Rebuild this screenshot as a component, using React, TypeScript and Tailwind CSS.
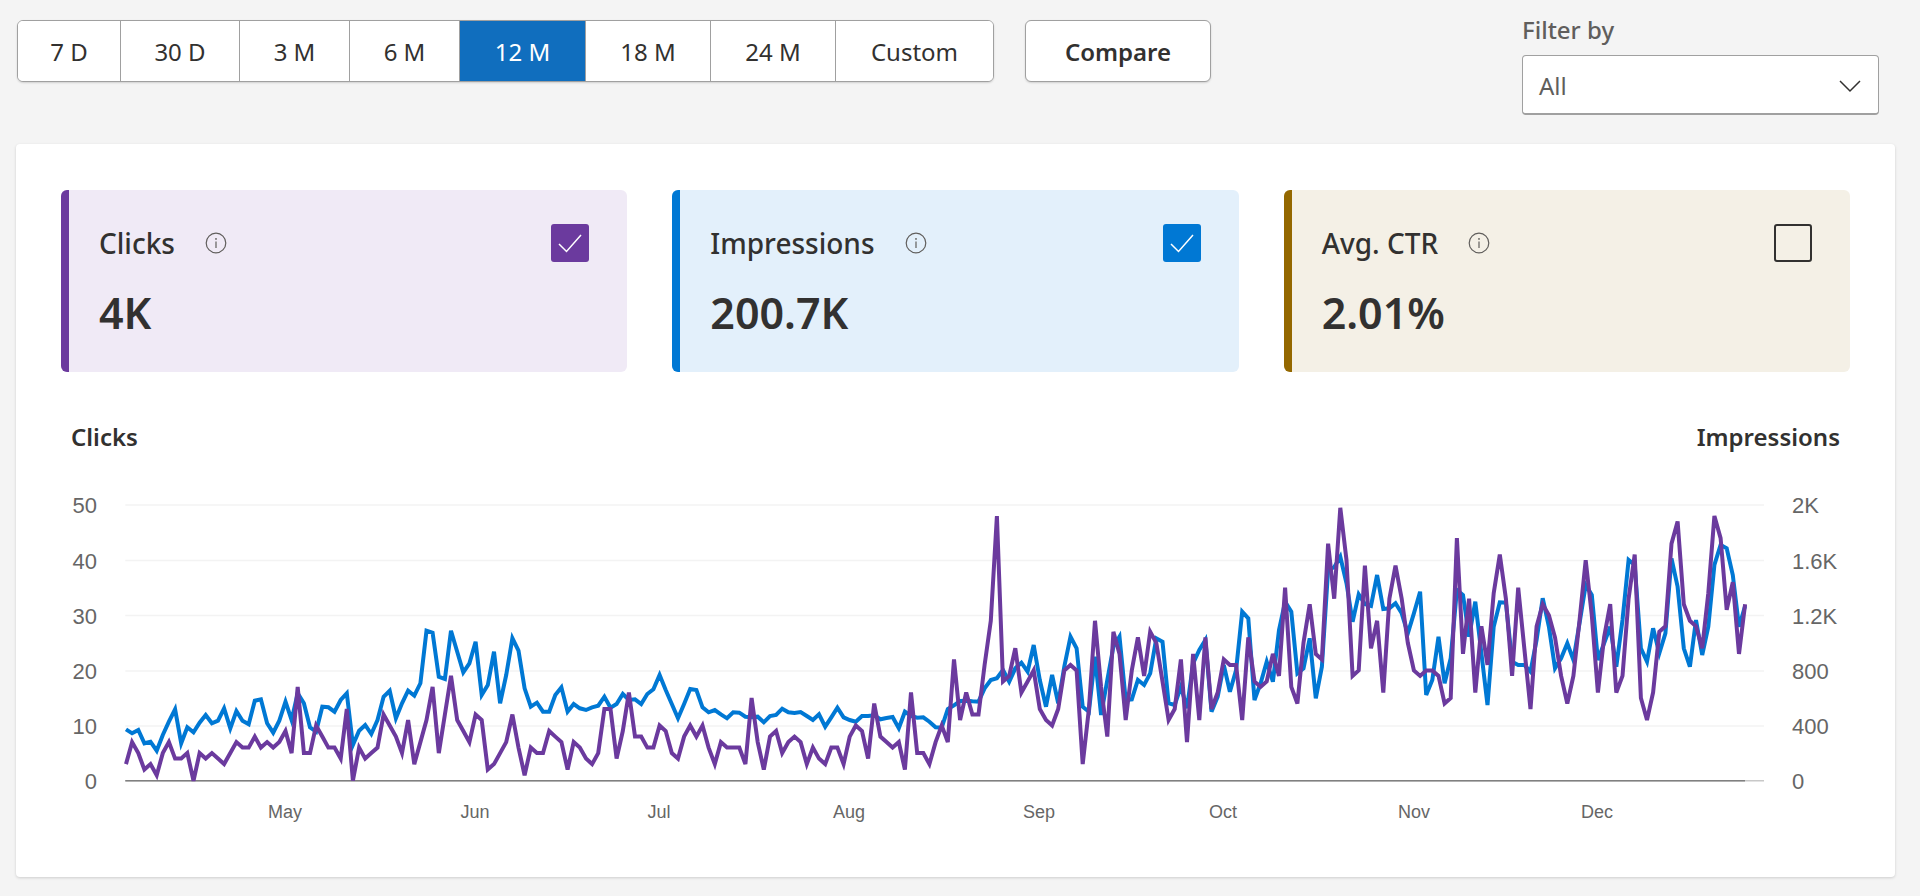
const ranges = [
  { label: "7 D", width: "w-[103px]" },
  { label: "30 D", width: "w-[119px]" },
  { label: "3 M", width: "w-[110px]" },
  { label: "6 M", width: "w-[110px]" },
  { label: "12 M", width: "w-[126px]", active: true },
  { label: "18 M", width: "w-[125px]" },
  { label: "24 M", width: "w-[125px]" },
  { label: "Custom", width: "w-[157px]" },
];

const metrics = [
  {
    title: "Clicks",
    value: "4K",
    panel: "bg-[#f0eaf6]",
    accent: "bg-[#6b3a9e]",
    box: "bg-[#6b3a9e]",
    checked: true,
  },
  {
    title: "Impressions",
    value: "200.7K",
    panel: "bg-[#e3f0fb]",
    accent: "bg-[#0078d4]",
    box: "bg-[#0078d4]",
    checked: true,
  },
  {
    title: "Avg. CTR",
    value: "2.01%",
    panel: "bg-[#f4f0e6]",
    accent: "bg-[#946800]",
    box: "",
    checked: false,
  },
];

// daily clicks, plotted against the 0-50 axis
const clicks = [
  3, 7, 5, 2, 3, 1, 5, 7, 4, 4, 5, 0, 5, 4, 5, 4, 3, 5, 7, 6,
  6, 8, 6, 7, 6, 7, 9, 5, 17, 5, 5, 10, 8, 6, 6, 4, 13, 0, 6, 4,
  5, 6, 12, 10, 8, 5, 11, 3, 7, 11, 17, 5, 12, 19, 11, 9, 7, 12, 11, 2,
  3, 5, 7, 12, 6, 1, 6, 5, 5, 9, 8, 7, 2, 7, 6, 4, 3, 5, 13, 13,
  4, 9, 16, 8, 8, 6, 6, 10, 9, 5, 4, 8, 10, 8, 10, 6, 3, 7, 6, 6,
  6, 3, 15, 7, 2, 8, 9, 5, 7, 8, 7, 3, 6, 4, 3, 6, 6, 3, 8, 10,
  9, 4, 14, 8, 7, 6, 7, 2, 16, 5, 5, 3, 7, 10, 7, 22, 11, 16, 12, 12,
  21, 29, 48, 18, 19, 24, 16, 18, 20, 13, 11, 10, 13, 20, 21, 20, 3, 13, 29, 17,
  8, 27, 23, 11, 20, 26, 19, 27, 25, 18, 11, 13, 22, 7, 23, 11, 26, 13, 16, 22,
  21, 21, 11, 26, 18, 17, 18, 23, 19, 35, 17, 14, 25, 32, 23, 22, 43, 33, 49.5, 40,
  19, 20, 39, 24, 29, 16, 33, 39, 33, 25, 20, 19, 20, 20, 19, 14, 15, 44, 23, 33,
  16, 28, 21, 34, 41, 33, 19, 35, 24, 13, 28, 32, 30, 26, 19, 14, 19, 29, 40, 30,
  16, 26, 32, 16, 19, 33, 41, 15, 11, 16, 27, 28, 43, 47, 32, 29, 28, 24, 34, 48,
  44, 31, 36, 23, 32,
];

// impressions, traced as height on a 3x grid (902 = axis, 75 = top line)
const impressions = [
  748, 760, 750, 790, 785, 812, 765, 725, 688, 790, 742, 757, 728, 705, 730, 722, 685, 745, 693, 722,
  733, 662, 658, 730, 758, 722, 665, 720, 640, 670, 742, 755, 680, 682, 695, 660, 640, 795, 752, 735,
  762, 720, 650, 632, 715, 670, 632, 647, 610, 452, 458, 590, 597, 452, 515, 577, 550, 485, 645, 615,
  515, 670, 585, 475, 512, 625, 680, 668, 695, 695, 645, 622, 695, 672, 685, 690, 682, 677, 650, 683,
  672, 642, 660, 658, 672, 642, 628, 585, 630, 672, 715, 672, 627, 630, 682, 697, 690, 703, 715, 697,
  698, 710, 712, 710, 727, 708, 705, 686, 697, 699, 696, 708, 720, 703, 740, 712, 683, 712, 720, 725,
  708, 708, 706, 718, 714, 711, 745, 695, 708, 713, 712, 725, 742, 743, 687, 676, 663, 662, 664, 665,
  625, 600, 595, 570, 605, 565, 548, 575, 495, 600, 680, 585, 670, 560, 470, 505, 680, 695, 530, 705,
  600, 500, 470, 660, 658, 600, 615, 580, 475, 485, 670, 675, 620, 685, 550, 510, 480, 695, 650, 555,
  635, 570, 395, 415, 660, 610, 545, 605, 450, 365, 395, 580, 565, 475, 655, 560, 270, 262, 230, 310,
  425, 343, 372, 378, 285, 387, 385, 370, 400, 460, 400, 335, 645, 600, 470, 610, 535, 330, 345, 470,
  365, 520, 675, 440, 367, 368, 545, 555, 555, 575, 480, 355, 440, 565, 535, 490, 540, 430, 315, 345,
  540, 490, 440, 560, 420, 240, 255, 505, 545, 445, 520, 460, 235, 320, 505, 560, 420, 525, 440, 255,
  195, 205, 285, 440, 378,
];

const leftTicks = ["50", "40", "30", "20", "10", "0"];
const rightTicks = ["2K", "1.6K", "1.2K", "800", "400", "0"];
const tickY = [25, 80.5, 135.5, 191, 246, 300.7];

const months = [
  { label: "May", x: 224 },
  { label: "Jun", x: 414 },
  { label: "Jul", x: 598 },
  { label: "Aug", x: 788 },
  { label: "Sep", x: 978 },
  { label: "Oct", x: 1162 },
  { label: "Nov", x: 1353 },
  { label: "Dec", x: 1536 },
];

const pointX = (i: number) => 65 + i * 6.133;
const clickPoints = clicks
  .map((v, i) => `${pointX(i).toFixed(1)},${((902 - v * 16.54) / 3).toFixed(1)}`)
  .join(" ");
const impressionPoints = impressions
  .map((v, i) => `${pointX(i).toFixed(1)},${(v / 3).toFixed(1)}`)
  .join(" ");

function InfoIcon() {
  return (
    <svg width="22" height="22" viewBox="0 0 22 22" fill="none" className="shrink-0">
      <circle cx="11" cy="11" r="9.8" stroke="#605e5c" strokeWidth="1.2" />
      <path d="M11 9.6v6.4" stroke="#605e5c" strokeWidth="1.2" />
      <circle cx="11" cy="6.9" r="0.9" fill="#605e5c" />
    </svg>
  );
}

function MetricCard({ title, value, panel, accent, box, checked }: (typeof metrics)[number]) {
  return (
    <div className={`flex h-[182px] overflow-hidden rounded-md ${panel}`}>
      <div className={`w-2 shrink-0 ${accent}`} />
      <div className="flex flex-1 items-start justify-between pl-[30px] pr-[38px] pt-[33px]">
        <div>
          <div className="flex h-10 items-center gap-[30px] text-[28px] font-medium text-[#323130]">
            {title}
            <InfoIcon />
          </div>
          <div className="mt-[20px] text-[43px] font-semibold leading-[60px] text-[#323130]">
            {value}
          </div>
        </div>
        {checked ? (
          <div className={`mt-px flex h-[38px] w-[38px] items-center justify-center rounded-[3px] ${box}`}>
            <svg width="26" height="22" viewBox="0 0 26 22" fill="none">
              <path d="M2 12l7.5 7.5L24 3" stroke="#fff" strokeWidth="1.5" />
            </svg>
          </div>
        ) : (
          <div className="mt-px h-[38px] w-[38px] rounded-[3px] border-2 border-[#323130]" />
        )}
      </div>
    </div>
  );
}

function TrendChart() {
  return (
    <svg width="1788" height="350" viewBox="0 0 1788 350" className="block font-['Liberation_Sans',Arial,sans-serif]">
      {tickY.slice(0, 5).map((y) => (
        <line key={y} x1="64.3" x2="1703" y1={y} y2={y} stroke="#f3f3f3" strokeWidth="1.5" />
      ))}
      <line x1="64.3" x2="1703" y1="300.7" y2="300.7" stroke="#c8c8c8" strokeWidth="1.5" />
      <line x1="64.3" x2="1684" y1="300.7" y2="300.7" stroke="#808080" strokeWidth="1.5" />
      {leftTicks.map((t, i) => (
        <text key={t} x="36" y={tickY[i] + 8} textAnchor="end" fontSize="22" fill="#666666">
          {t}
        </text>
      ))}
      {rightTicks.map((t, i) => (
        <text key={t} x="1731" y={tickY[i] + 8} fontSize="22" fill="#666666">
          {t}
        </text>
      ))}
      {months.map((m) => (
        <text key={m.label} x={m.x} y="338" textAnchor="middle" fontSize="18" fill="#666666">
          {m.label}
        </text>
      ))}
      <polyline points={impressionPoints} fill="none" stroke="#0078d4" strokeWidth="4" />
      <polyline points={clickPoints} fill="none" stroke="#6b3a9e" strokeWidth="4" />
    </svg>
  );
}

export default function App() {
  return (
    <div className="min-h-[896px] bg-[#f4f4f4] pt-5 font-['Noto_Sans',sans-serif] text-[#323130]">
      <div className="flex h-[124px] items-start pl-[17px] pr-[41px]">
        <div className="flex h-[62px] overflow-hidden rounded-md border border-[#a0a0a0] bg-white shadow-[0_1px_2px_rgba(0,0,0,0.15)]">
          {ranges.map((r) => (
            <button
              key={r.label}
              className={`${r.width} border-r border-[#a0a0a0] pt-0.5 text-2xl last:border-r-0 ${
                r.active ? "bg-[#106ebe] text-white" : "bg-white text-[#323130]"
              }`}
            >
              {r.label}
            </button>
          ))}
        </div>
        <button className="ml-[31px] h-[62px] w-[186px] rounded-md border border-[#a0a0a0] bg-white pt-0.5 text-2xl font-semibold shadow-[0_1px_2px_rgba(0,0,0,0.15)]">
          Compare
        </button>
        <div className="ml-auto -mt-[10px] w-[357px]">
          <div className="mb-[5px] text-2xl font-medium leading-[40px] text-[#605e5c]">Filter by</div>
          <div className="flex h-[60px] items-center justify-between rounded-sm border border-b-2 border-[#a0a0a0] bg-white pl-4 pr-4 pt-0.5">
            <span className="text-2xl text-[#605e5c]">All</span>
            <svg width="24" height="14" viewBox="0 0 24 14" fill="none">
              <path d="M2 2l10 10L22 2" stroke="#323130" strokeWidth="1.5" />
            </svg>
          </div>
        </div>
      </div>

      <div className="ml-4 mr-[25px] h-[733px] rounded-[4px] bg-white px-[45px] pt-[46px] shadow-[0_1px_3px_rgba(0,0,0,0.16)]">
        <div className="grid grid-cols-3 gap-[45px]">
          {metrics.map((m) => (
            <MetricCard key={m.title} {...m} />
          ))}
        </div>
        <div className="mt-[50px] flex justify-between px-[10px] text-2xl font-semibold leading-[30px]">
          <span>Clicks</span>
          <span>Impressions</span>
        </div>
        <div className="mt-7">
          <TrendChart />
        </div>
      </div>
    </div>
  );
}
